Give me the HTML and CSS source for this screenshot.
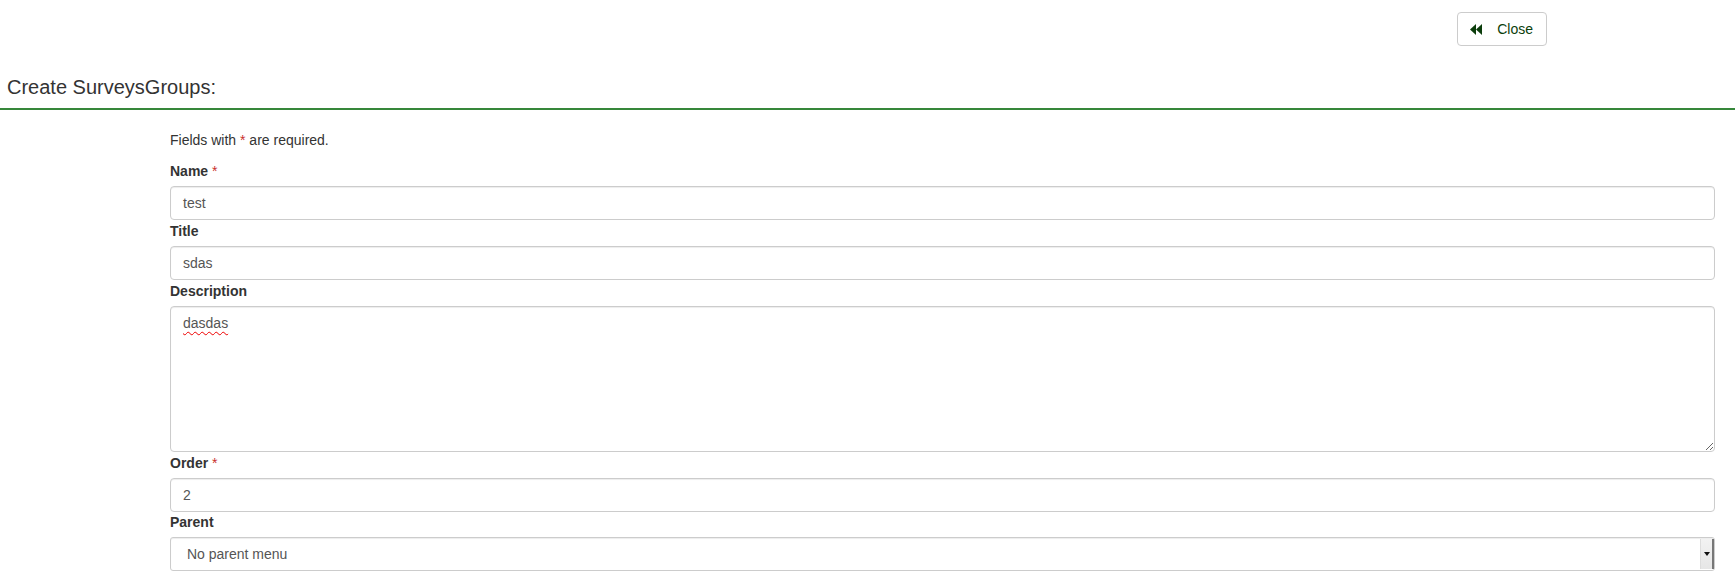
FILE: index.html
```html
<!DOCTYPE html>
<html lang="en">
<head>
<meta charset="utf-8">
<title>Create SurveysGroups</title>
<link rel="stylesheet" href="styles.css">
</head>
<body>
<div class="topbar">
  <a class="btn" href="#">
    <svg class="btn-icon" width="12" height="11" viewBox="0 0 12 11" aria-hidden="true">
      <polygon points="6,0 0,5.5 6,11"/>
      <polygon points="12,0 6,5.5 12,11"/>
    </svg>
    <span>Close</span>
  </a>
</div>
<h1 class="page-title">Create SurveysGroups:</h1>
<form class="form">
  <p class="note">Fields with <span class="required">*</span> are required.</p>
  <div class="row">
    <label class="label">Name <span class="required">*</span></label>
    <div class="control">test</div>
  </div>
  <div class="row">
    <label class="label">Title</label>
    <div class="control">sdas</div>
  </div>
  <div class="row">
    <label class="label">Description</label>
    <div class="control area"><span class="misspelled">dasdas</span></div>
  </div>
  <div class="row">
    <label class="label">Order <span class="required">*</span></label>
    <div class="control">2</div>
  </div>
  <div class="row last">
    <label class="label">Parent</label>
    <div class="control select">
      <span class="select-text">No parent menu</span>
      <span class="select-btn"><span class="caret"></span></span>
    </div>
  </div>
</form>
</body>
</html>
```
FILE: styles.css
```css
html, body {
  margin: 0;
  padding: 0;
  background: #fff;
}
body {
  font-family: "Liberation Sans", Arial, Helvetica, sans-serif;
  font-size: 14px;
  line-height: 20px;
  color: #333;
}
.topbar {
  display: flex;
  justify-content: flex-end;
  padding: 12px 188px 0 0;
}
.btn {
  display: inline-flex;
  align-items: center;
  padding: 6px 13px 6px 12px;
  border: 1px solid #ccc;
  border-radius: 4px;
  background: #fff;
  color: #0b400b;
  text-decoration: none;
  font-size: 14px;
  line-height: 20px;
}
.btn-icon {
  fill: #0b3d0b;
  margin-right: 15px;
  margin-top: 1px;
}
.page-title {
  margin: 30px 0 0;
  padding: 0 0 10px 7px;
  font-size: 20px;
  line-height: 22px;
  font-weight: normal;
  color: #333;
  border-bottom: 2px solid #36873a;
}
.form {
  margin: 20px 20px 0 170px;
}
.note {
  margin: 0 0 11px;
}
.required {
  color: #c9302c;
  font-weight: normal;
}
.row {
  margin-bottom: 1px;
}
.row.last {
  margin-top: -1px;
}
.label {
  display: block;
  font-weight: bold;
  margin: 0 0 5px;
}
.control {
  box-sizing: border-box;
  height: 34px;
  padding: 6px 12px;
  border: 1px solid #ccc;
  border-radius: 4px;
  color: #555;
  background: #fff;
  box-shadow: inset 0 1px 1px rgba(0, 0, 0, 0.075);
}
.area {
  height: 146px;
  overflow: auto;
  resize: vertical;
}
.misspelled {
  text-decoration: underline wavy #e00;
  text-decoration-thickness: 1px;
  text-underline-offset: 3px;
}
.select {
  display: flex;
  align-items: stretch;
  padding: 1px 0 1px 16px;
  border-radius: 3px;
}
.select-text {
  flex: 1;
  display: flex;
  align-items: center;
}
.select-btn {
  width: 11px;
  display: flex;
  align-items: center;
  justify-content: center;
  background: linear-gradient(#f2f2f2, #e6e6e6);
  border-right: 2px solid #777;
  border-left: 1px solid #ddd;
}
.caret {
  width: 0;
  height: 0;
  border-left: 3px solid transparent;
  border-right: 3px solid transparent;
  border-top: 4px solid #111;
}
```
